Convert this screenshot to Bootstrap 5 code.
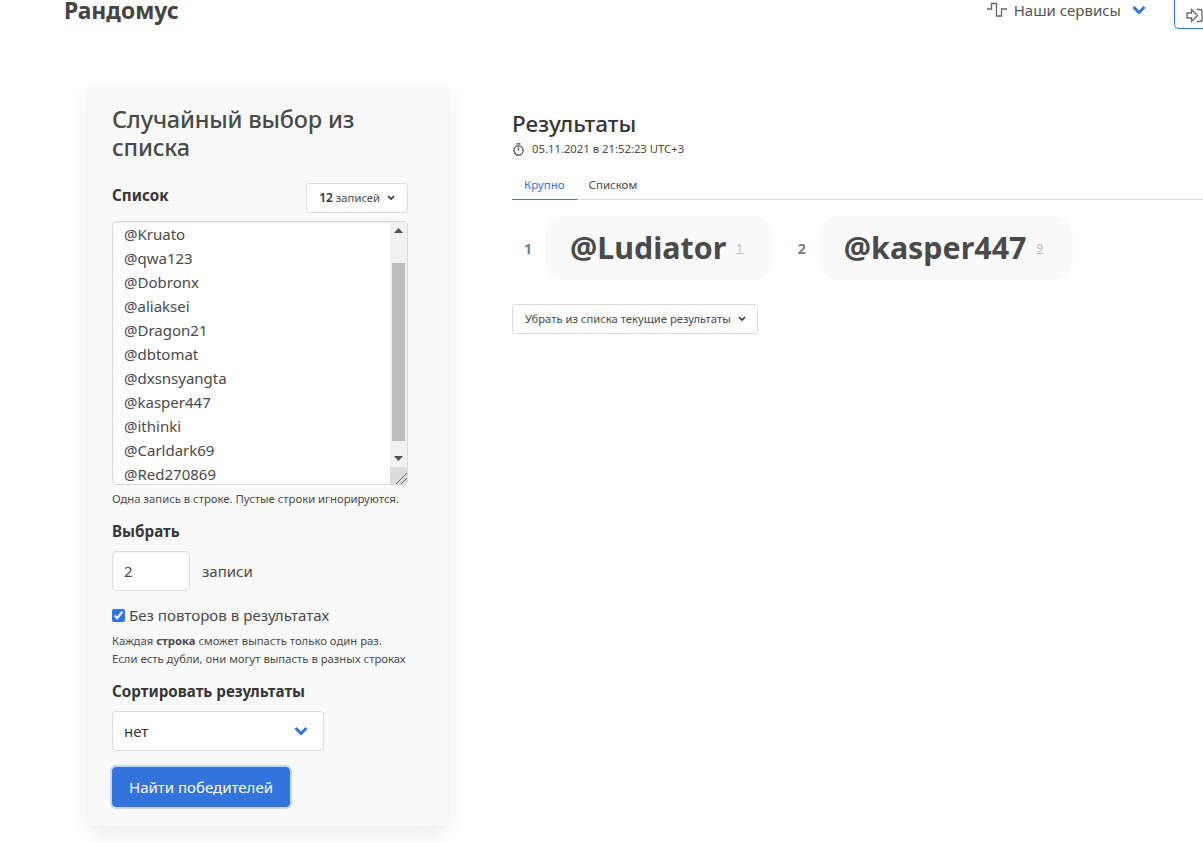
<!DOCTYPE html>
<html lang="ru">
<head>
  <meta charset="utf-8">
  <title>Рандомус</title>
  <link href="https://cdn.jsdelivr.net/npm/bootstrap@5.3.2/dist/css/bootstrap.min.css" rel="stylesheet">
  <style>
    html, body { height: 843px; overflow: hidden; }
    body { font-family: "Noto Sans", "Open Sans", sans-serif; color: #4a4a4a; font-size: 15px; background: #fff; }
    .top-bar { height: 30px; padding-left: 64px; }
    .brand-name { font-size: 22.9px; font-weight: 700; color: #444; line-height: 22px; }
    .services-link { font-size: 15px; color: #555; gap: 7px; margin-right: 28px; margin-top: -9px; height: 38px; }
    .login-btn { width: 40px; height: 29px; margin-right: -11px; border: 1px solid #3273dc; border-top: 0; border-radius: 0 0 0 5px; padding: 2px 0 0 11px; background: #fff; }
    .page-body { padding-left: 88px; margin-top: 55px; gap: 64px; }
    .form-panel { width: 360px; height: 741px; flex: none; background: #fafafa; border-radius: 6px; padding: 20px 24px; box-shadow: 0 8px 20px rgba(0,0,0,.08), 0 0 2px rgba(0,0,0,.05); }
    .panel-title { font-size: 23.5px; letter-spacing: -.2px; line-height: 28px; font-weight: 500; color: #4a4a4a; margin: 0 0 23px; }
    .field-title { font-size: 15.2px; font-weight: 700; color: #363636; line-height: 22px; }
    .white-btn { background: #fff; border: 1px solid #dbdbdb; border-radius: 3px; font-size: 11.25px; color: #4a4a4a; height: 30px; padding: 0 11px 0 12px; gap: 7px; }
    .white-btn b { color: #363636; font-weight: 600; font-size: 12px; }
    .list-head { width: 296px; height: 30px; }
    .list-head .white-btn { margin-top: -1px; padding: 0 12px; }
    .names-wrap { width: 296px; height: 264px; margin-top: 7px; }
    .names-area { display: block; width: 100%; height: 100%; border: 1px solid #dbdbdb; border-radius: 4px; box-shadow: inset 0 1px 2px rgba(10,10,10,.1); padding: 8px 30px 8px 11px; font-size: 15px; line-height: 24px; color: #4a4a4a; overflow: hidden; outline: 0; resize: none; }
    .fake-scroll { top: 1px; right: 1px; bottom: 1px; width: 17px; background: #f1f1f1; }
    .fake-step { height: 17px; }
    .fake-track { flex: 1; }
    .fake-thumb { width: 13px; height: 178px; margin: 24px auto 0; background: #bebebe; }
    .fake-corner { height: 17px; background: #dcdcdc; border-radius: 0 0 3px 0; }
    .hint-text { font-size: 11.3px; line-height: 18px; color: #4a4a4a; }
    .count-input { width: 78px; height: 40px; border: 1px solid #dbdbdb; border-radius: 4px; padding: 0 11px; font-size: 15px; color: #4a4a4a; background: #fff; box-shadow: inset 0 1px 2px rgba(10,10,10,.06); }
    .check-line { margin-top: 13px; line-height: 22px; }
    .check-line input { width: 13px; height: 13px; accent-color: #3273dc; margin: 0 4px 0 0; }
    .check-line span { font-size: 15.1px; }
    .sort-box { width: 212px; margin-top: 9px; }
    .sort-select { width: 212px; height: 40px; border: 1px solid #dbdbdb; border-radius: 4px; font-size: 15px; padding: 0 11px; color: #363636; background: #fff; }
    .sort-arrow { right: 16px; top: 15px; }
    .find-btn { background: #3273dc; color: #fff; font-size: 15px; height: 40px; width: 178px; border: 1px solid #3273dc; border-radius: 4px; box-shadow: 0 0 0 2px rgba(50,115,220,.25); padding: 0; margin-top: 16px; }
    .results-side { flex: 1; padding-top: 24px; min-width: 0; }
    .results-title { font-size: 22.5px; line-height: 30px; font-weight: 500; color: #363636; margin: 0; }
    .time-line { font-size: 11.3px; color: #4a4a4a; gap: 7px; line-height: 16px; margin-top: 2px; }
    .result-tabs { border-bottom: 1px solid #dbdbdb; margin-top: 11px; font-size: 11.5px; height: 32px; }
    .result-tabs a { display: block; height: 32px; padding: 8px 12px 0; color: #4a4a4a; text-decoration: none; }
    .result-tabs a.current { color: #3273dc; border-bottom: 1px solid #3273dc; }
    .winner-row { margin-top: 16px; margin-left: 12px; gap: 25px; }
    .winner-num { font-size: 14px; font-weight: 700; color: #7a7a7a; width: 21px; }
    .winner-box { background: #fafafa; border-radius: 20px; height: 64px; padding: 0 30px 0 25px; gap: 10px; }
    .winner-name { font-size: 30.4px; font-weight: 700; color: #4a4a4a; line-height: 1; }
    .winner-line { font-size: 11.25px; color: #b5b5b5; text-decoration: underline; margin-top: 0; }
    .remove-btn { margin-top: 24px; }
  </style>
</head>
<body>
  <header class="top-bar d-flex justify-content-between align-items-start">
    <div class="brand-name">Рандомус</div>
    <div class="d-flex align-items-start">
      <a class="services-link d-flex align-items-center text-decoration-none" href="#">
        <svg width="20" height="16" viewBox="0 0 20 16" fill="none" stroke="#666" stroke-width="1.3"><path d="M0 7h4.500V1.500h5V14h5V7H20"/></svg>
        <span>Наши сервисы</span>
        <svg class="ms-1" width="14" height="10" viewBox="0 0 14 10" fill="none" stroke="#3273dc" stroke-width="3"><path d="M1.500 2l5.500 5.500L12.500 2"/></svg>
      </a>
      <button class="login-btn d-block" type="button" aria-label="Войти">
        <svg class="d-block" width="17" height="15" viewBox="0 0 17 15" fill="none" stroke="#666" stroke-width="1.300"><path d="M1 5h4.500V1.500L11.500 7.500l-6 6V10H1zM11 1.500h3a2 2 0 0 1 2 2v8a2 2 0 0 1-2 2h-3"/></svg>
      </button>
    </div>
  </header>

  <main class="page-body d-flex align-items-start">
    <section class="form-panel">
      <h1 class="panel-title">Случайный выбор из списка</h1>

      <div class="list-head d-flex justify-content-between align-items-start">
        <div class="field-title">Список</div>
        <button class="white-btn d-flex align-items-center" type="button">
          <span><b>12</b> записей</span>
          <svg width="8" height="6" viewBox="0 0 8 6" fill="none" stroke="#363636" stroke-width="1.700"><path d="M1 1l3 3 3-3"/></svg>
        </button>
      </div>
      <div class="names-wrap position-relative">
        <textarea class="names-area" id="names" spellcheck="false">@Ludiator
@Kruato
@qwa123
@Dobronx
@aliaksei
@Dragon21
@dbtomat
@dxsnsyangta
@kasper447
@ithinki
@Carldark69
@Red270869</textarea>
        <div class="fake-scroll position-absolute d-flex flex-column">
          <div class="fake-step d-flex align-items-center justify-content-center">
            <svg width="9" height="5" viewBox="0 0 9 5"><path fill="#505050" d="M4.500 0L9 5H0z"/></svg>
          </div>
          <div class="fake-track"><div class="fake-thumb"></div></div>
          <div class="fake-step d-flex align-items-center justify-content-center">
            <svg width="9" height="5" viewBox="0 0 9 5"><path fill="#505050" d="M4.500 5L9 0H0z"/></svg>
          </div>
          <div class="fake-corner d-flex align-items-end justify-content-end">
            <svg width="12" height="12" viewBox="0 0 12 12" fill="none" stroke="#666" stroke-width="1"><path d="M1 12L12 1M6 12l6-6"/></svg>
          </div>
        </div>
      </div>
      <div class="hint-text" style="margin-top:5px">Одна запись в строке. Пустые строки игнорируются.</div>

      <div class="field-title" style="margin-top:12px">Выбрать</div>
      <div class="d-flex align-items-center gap-2" style="margin-top:9px">
        <input class="count-input" type="text" value="2">
        <span class="ms-1">записи</span>
      </div>

      <label class="check-line d-flex align-items-center">
        <input type="checkbox" checked>
        <span>Без повторов в результатах</span>
      </label>
      <div class="hint-text" style="margin-top:6px">Каждая <b>строка</b> сможет выпасть только один раз.<br>Если есть дубли, они могут выпасть в разных строках</div>

      <div class="field-title" style="margin-top:12px">Сортировать результаты</div>
      <div class="sort-box position-relative">
        <div class="sort-select d-flex align-items-center">нет</div>
        <svg class="sort-arrow position-absolute" width="14" height="10" viewBox="0 0 14 10" fill="none" stroke="#3273dc" stroke-width="3"><path d="M1.500 2l5.500 5.500L12.500 2"/></svg>
      </div>
      <button class="find-btn d-block" type="button">Найти победителей</button>
    </section>

    <section class="results-side">
      <h2 class="results-title">Результаты</h2>
      <div class="time-line d-flex align-items-center">
        <svg width="13" height="13" viewBox="0 0 13 13" fill="none" stroke="#444" stroke-width="1.200"><circle cx="6.500" cy="7.500" r="4.600"/><path d="M6.500 7.500V4.500M4.500 .8h4"/></svg>
        <span>05.11.2021 в 21:52:23 UTC+3</span>
      </div>
      <nav class="result-tabs d-flex">
        <a class="current" href="#">Крупно</a>
        <a href="#">Списком</a>
      </nav>
      <div class="winner-row d-flex align-items-center">
        <div class="d-flex align-items-center">
          <span class="winner-num">1</span>
          <div class="winner-box d-flex align-items-center">
            <span class="winner-name">@Ludiator</span>
            <span class="winner-line">1</span>
          </div>
        </div>
        <div class="d-flex align-items-center">
          <span class="winner-num">2</span>
          <div class="winner-box d-flex align-items-center">
            <span class="winner-name">@kasper447</span>
            <span class="winner-line">9</span>
          </div>
        </div>
      </div>
      <button class="white-btn remove-btn d-flex align-items-center" type="button">
        <span>Убрать из списка текущие результаты</span>
        <svg width="8" height="6" viewBox="0 0 8 6" fill="none" stroke="#363636" stroke-width="1.700"><path d="M1 1l3 3 3-3"/></svg>
      </button>
    </section>
  </main>

  <script src="https://cdn.jsdelivr.net/npm/bootstrap@5.3.2/dist/js/bootstrap.bundle.min.js"></script>
  <script>
    document.getElementById('names').scrollTop = 32;
  </script>
</body>
</html>
